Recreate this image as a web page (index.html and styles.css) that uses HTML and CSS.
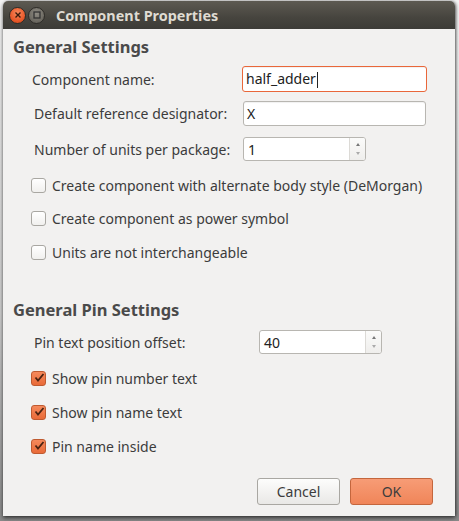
FILE: index.html
```html
<!DOCTYPE html>
<html>
<head>
<meta charset="utf-8">
<link rel="stylesheet" href="styles.css">
</head>
<body>
<div class="window">
  <div class="titlebar">
    <div class="wbtn close"><svg width="8" height="8" viewBox="0 0 8 8"><path d="M1.5 1.5 L6.5 6.5 M6.5 1.5 L1.5 6.5" stroke="#3a1a0c" stroke-width="1.4"/></svg></div>
    <div class="wbtn max"><svg width="8" height="8" viewBox="0 0 8 8"><rect x="1" y="1" width="6" height="6" fill="none" stroke="#333" stroke-width="1.3"/></svg></div>
    <div class="title">Component Properties</div>
  </div>
  <div class="content">
    <div class="heading">General Settings</div>
    <div class="form">
      <div class="row r1">
        <span class="label">Component name:</span>
        <div class="entry focus">half_adder<span class="caret"></span></div>
      </div>
      <div class="row r2">
        <span class="label">Default reference designator:</span>
        <div class="entry e2">X</div>
      </div>
      <div class="row r3">
        <span class="label">Number of units per package:</span>
        <div class="spin"><span class="val">1</span><div class="arrows"><span class="up"></span><span class="down"></span></div></div>
      </div>
    </div>
    <div class="checks">
      <label class="check"><span class="box"></span>Create component with alternate body style (DeMorgan)</label>
      <label class="check"><span class="box"></span>Create component as power symbol</label>
      <label class="check"><span class="box"></span>Units are not interchangeable</label>
    </div>
    <div class="heading h2">General Pin Settings</div>
    <div class="row r4">
      <span class="label">Pin text position offset:</span>
      <div class="spin"><span class="val">40</span><div class="arrows"><span class="up"></span><span class="down"></span></div></div>
    </div>
    <div class="checks c2">
      <label class="check"><span class="box on"><svg width="12" height="12" viewBox="0 0 12 12"><path d="M2.5 5.5 L5 8.5 L10.5 2" fill="none" stroke="#4a2312" stroke-width="1.8"/></svg></span>Show pin number text</label>
      <label class="check"><span class="box on"><svg width="12" height="12" viewBox="0 0 12 12"><path d="M2.5 5.5 L5 8.5 L10.5 2" fill="none" stroke="#4a2312" stroke-width="1.8"/></svg></span>Show pin name text</label>
      <label class="check"><span class="box on"><svg width="12" height="12" viewBox="0 0 12 12"><path d="M2.5 5.5 L5 8.5 L10.5 2" fill="none" stroke="#4a2312" stroke-width="1.8"/></svg></span>Pin name inside</label>
    </div>
    <div class="buttons">
      <button class="btn cancel">Cancel</button>
      <button class="btn ok">OK</button>
    </div>
  </div>
</div>
</body>
</html>
```
FILE: styles.css
```css
html, body {
  margin: 0;
  padding: 0;
}
body {
  width: 459px;
  height: 521px;
  background: linear-gradient(180deg, #f4f4f4 0%, #cfcfcf 60%, #8a8a8a 100%);
  font-family: "Noto Sans", "DejaVu Sans", sans-serif;
  font-size: 14px;
  color: #3c3c3c;
  overflow: hidden;
}
.window {
  margin-left: 3px;
  margin-top: 1px;
  width: 452px;
  height: 515px;
  background: #f2f1f0;
  border-radius: 5px 5px 0 0;
  box-shadow: 0 2px 4px rgba(0,0,0,0.55), 1px 0 3px rgba(0,0,0,0.4);
  display: flex;
  flex-direction: column;
}
.titlebar {
  height: 28px;
  border-radius: 5px 5px 0 0;
  background: linear-gradient(180deg, #5d5a52 0%, #46443e 60%, #3c3b37 100%);
  display: flex;
  align-items: center;
  padding-left: 6px;
  flex-shrink: 0;
}
.wbtn {
  width: 17px;
  height: 17px;
  border-radius: 50%;
  display: flex;
  align-items: center;
  justify-content: center;
  box-sizing: border-box;
}
.close {
  background: radial-gradient(circle at 50% 35%, #f88a5e 0%, #e9592a 60%, #c94516 100%);
  border: 1px solid #2e2c28;
}
.max {
  margin-left: 2px;
  background: radial-gradient(circle at 50% 35%, #8e8b83 0%, #6a675f 70%, #55524b 100%);
  border: 1px solid #2e2c28;
}
.title {
  margin-left: 11px;
  font-weight: bold;
  font-size: 14.4px;
  color: #dfdbd2;
}
.content {
  flex: 1;
  display: flex;
  flex-direction: column;
  padding: 0 0 0 10px;
}
.heading {
  font-weight: bold;
  font-size: 16.5px;
  color: #4a4a4a;
  margin-top: 8px;
  height: 20px;
  line-height: 20px;
}
.h2 {
  margin-top: 39px;
}
.form {
  display: flex;
  flex-direction: column;
}
.row {
  display: flex;
  align-items: center;
}
.label {
  display: inline-block;
}
.r1 {
  margin-top: 9px;
  padding-left: 19px;
}
.r1 .label { width: 210px; }
.r2 {
  margin-top: 9px;
  padding-left: 21px;
}
.r2 .label { width: 209px; }
.r3 {
  margin-top: 11px;
  padding-left: 21px;
}
.r3 .label { width: 209px; }
.entry {
  box-sizing: border-box;
  width: 185px;
  height: 25px;
  border: 1px solid #b8b6b1;
  border-radius: 3px;
  background: #fff;
  padding-left: 3px;
  line-height: 23px;
  font-size: 14px;
  color: #222;
  box-shadow: inset 0 1px 1px rgba(0,0,0,0.06);
}
.focus {
  border-color: #e9673a;
  height: 26px;
  line-height: 24px;
}
.e2 { width: 183px; }
.caret {
  display: inline-block;
  width: 1px;
  height: 16px;
  background: #222;
  vertical-align: middle;
  margin-left: 1px;
}
.spin {
  box-sizing: border-box;
  width: 123px;
  height: 24px;
  border: 1px solid #b8b6b1;
  border-radius: 3px;
  background: #fff;
  display: flex;
  align-items: stretch;
  font-size: 14px;
  color: #222;
}
.spin .val {
  flex: 1;
  padding-left: 4px;
  line-height: 24px;
}
.arrows {
  width: 15px;
  border-left: 1px solid #dcdad6;
  background: linear-gradient(180deg, #fbfbfa, #efeeec);
  border-radius: 0 2px 2px 0;
  display: flex;
  flex-direction: column;
  align-items: center;
  justify-content: center;
  gap: 6px;
}
.up {
  width: 0; height: 0;
  border-left: 2.5px solid transparent;
  border-right: 2.5px solid transparent;
  border-bottom: 3px solid #777;
}
.down {
  width: 0; height: 0;
  border-left: 2.5px solid transparent;
  border-right: 2.5px solid transparent;
  border-top: 3px solid #aaa;
}
.checks {
  display: flex;
  flex-direction: column;
  margin-top: 15px;
  padding-left: 18px;
  gap: 15.5px;
}
.check {
  display: flex;
  align-items: center;
  height: 18px;
  gap: 6px;
}
.box {
  box-sizing: border-box;
  width: 15px;
  height: 15px;
  border: 1px solid #a9a7a2;
  border-radius: 3px;
  background: linear-gradient(180deg, #ffffff, #f1f0ee);
  display: flex;
  align-items: center;
  justify-content: center;
}
.box.on {
  border-color: #bf5a30;
  background: linear-gradient(180deg, #f58a5c, #e96a38);
}
.r4 {
  margin-top: 10px;
  padding-left: 21px;
}
.r4 .label { width: 225px; }
.c2 {
  margin-top: 15px;
  gap: 16px;
}
.buttons {
  display: flex;
  justify-content: flex-end;
  gap: 10px;
  margin-top: 23px;
  padding-right: 22px;
}
.btn {
  box-sizing: border-box;
  width: 83px;
  height: 27px;
  border-radius: 3px;
  font-family: "Noto Sans", "DejaVu Sans", sans-serif;
  font-size: 14px;
  color: #3c3c3c;
  padding: 0;
}
.cancel {
  border: 1px solid #a9a7a2;
  background: linear-gradient(180deg, #fdfdfc, #e9e8e6);
}
.ok {
  border: 1px solid #c4663d;
  background: linear-gradient(180deg, #f79c76, #f08559);
}
```
